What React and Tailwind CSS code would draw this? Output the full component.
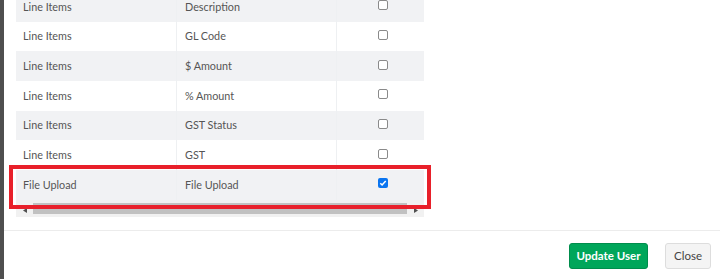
import React from "react";

const rows = [
  ["Line Items", "Description", false],
  ["Line Items", "GL Code", false],
  ["Line Items", "$ Amount", false],
  ["Line Items", "% Amount", false],
  ["Line Items", "GST Status", false],
  ["Line Items", "GST", false],
  ["File Upload", "File Upload", true],
];

function Box({ checked }) {
  if (checked) {
    return (
      <div className="w-[10px] h-[10px] rounded-[2px] bg-[#0a75f0] flex items-center justify-center mb-[3px]">
        <svg width="8" height="8" viewBox="0 0 8 8">
          <path d="M1.3 4.2 L3.1 6 L6.7 2" stroke="white" strokeWidth="1.5" fill="none" />
        </svg>
      </div>
    );
  }
  return <div className="w-[10px] h-[10px] rounded-[2px] border border-[#8a8a8a] bg-white mb-[3px]" />;
}

export default function App() {
  return (
    <div
      className="relative w-[720px] h-[279px] overflow-hidden bg-[#4f4f4f] flex"
      style={{ fontFamily: "Lato, 'Liberation Sans', sans-serif" }}
    >
      <div className="ml-[4px] flex-1 bg-white flex flex-col">
        <div className="pl-[12px] -mt-[8px] pb-[13px]">
          <div className="w-[408px] text-[10.8px] text-[#555555]">
            {rows.map((r, i) => (
              <div
                key={i}
                className={`flex h-[29.67px] ${i % 2 === 0 ? "bg-[#f1f2f4]" : "bg-white"}`}
              >
                <div className="w-[160px] flex items-center pl-[7px]">{r[0]}</div>
                <div className="w-[160px] flex items-center pl-[8px] border-l border-[#eef0f2]">{r[1]}</div>
                <div className="w-[88px] flex items-center pl-[41px] border-l border-[#eef0f2]">
                  <Box checked={r[2]} />
                </div>
              </div>
            ))}
            <div className="h-[17px] bg-[#f1f1f1] flex">
              <div className="w-[17px] flex items-center justify-center pt-[4px]">
                <svg width="4" height="5" viewBox="0 0 4 5"><path d="M4 0 L0 2.5 L4 5 Z" fill="#505050" /></svg>
              </div>
              <div className="flex-1 py-[3px]">
                <div className="h-full bg-[#c1c1c1]" />
              </div>
              <div className="w-[17px] flex items-center justify-center pt-[4px]">
                <svg width="4" height="5" viewBox="0 0 4 5"><path d="M0 0 L4 2.5 L0 5 Z" fill="#505050" /></svg>
              </div>
            </div>
          </div>
        </div>
        <div className="border-t border-[#ececec] pt-[12px] pr-[9px] flex justify-end gap-[17px]">
          <button className="w-[79px] h-[26px] rounded-[3px] bg-[#00a65a] border border-[#008d4c] text-white text-[11.5px] font-bold">
            Update User
          </button>
          <button className="w-[46px] h-[26px] rounded-[3px] bg-[#f4f4f4] border border-[#dddddd] text-[#444] text-[11.5px]">
            Close
          </button>
        </div>
      </div>
      <div className="absolute left-[9px] top-[165px] w-[422px] h-[44px] border-4 border-[#e8202a] pointer-events-none" />
    </div>
  );
}
